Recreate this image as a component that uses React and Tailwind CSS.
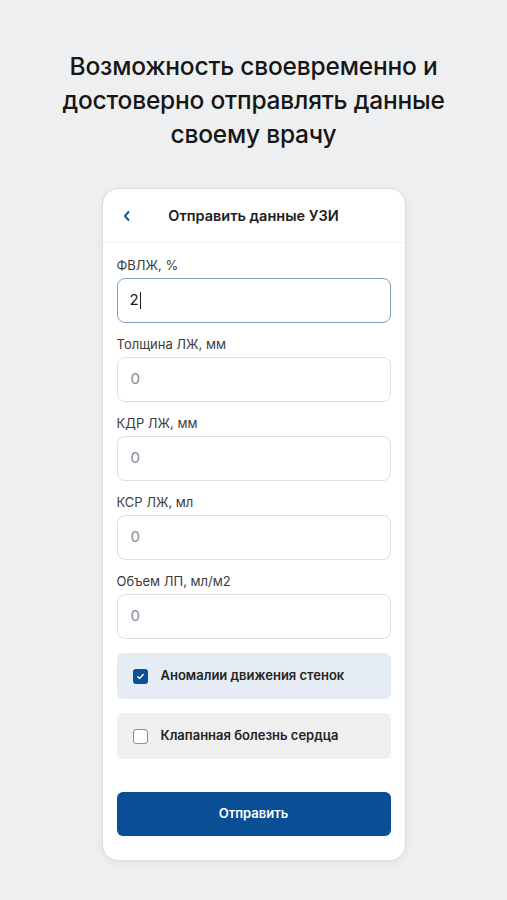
import React from "react";

const FIELDS = [
  { label: "ФВЛЖ, %", value: "2", active: true },
  { label: "Толщина ЛЖ, мм", value: "" },
  { label: "КДР ЛЖ, мм", value: "" },
  { label: "КСР ЛЖ, мл", value: "" },
  { label: "Объем ЛП, мл/м2", value: "" },
];

const Field = ({ label, value, active }) => (
  <div className="flex flex-col">
    <span className="text-[13px] leading-[16px] text-[#3c3c3c] mb-[5px]">{label}</span>
    {active ? (
      <div className="h-[45px] rounded-[8px] border-[1.5px] border-[#7f9fc4] bg-white flex items-center px-[12px] text-[15px] text-[#1c1c1c]">
        {value}
        <span className="w-[1px] h-[17px] bg-[#1c1c1c] ml-[1px]" />
      </div>
    ) : (
      <div className="h-[45px] rounded-[8px] border border-[#dedede] bg-white flex items-center px-[13px] text-[15px] text-[#8a8a8a]">
        0
      </div>
    )}
  </div>
);

const CheckRow = ({ label, checked }) => (
  <div
    className={
      "h-[46px] rounded-[6px] flex items-center px-[16px] gap-[13px] " +
      (checked ? "bg-[#e5ecf3]" : "bg-[#efefef]")
    }
  >
    {checked ? (
      <span className="w-[15px] h-[15px] rounded-[3px] bg-[#0b4f94] flex items-center justify-center">
        <svg width="9" height="9" viewBox="0 0 10 10" fill="none">
          <path d="M2 5.2l2 2 4-4.4" stroke="white" strokeWidth="1.6" strokeLinecap="round" strokeLinejoin="round" />
        </svg>
      </span>
    ) : (
      <span className="w-[15px] h-[15px] rounded-[3px] border-[1.5px] border-[#8c8c8c] bg-white" />
    )}
    <span className="text-[13px] font-semibold text-[#232323]">{label}</span>
  </div>
);

export default function App() {
  return (
    <div
      className="w-[507px] h-[900px] bg-[#eeeff1] flex flex-col items-center overflow-hidden"
      style={{ fontFamily: "Inter, 'Noto Sans', sans-serif" }}
    >
      <h1 className="mt-[49px] text-center text-[24.5px] leading-[34px] font-medium text-[#161616] tracking-[-0.2px]">
        Возможность своевременно и<br />
        достоверно отправлять данные<br />
        своему врачу
      </h1>

      <div className="mt-[37px] w-[304px] bg-white rounded-[16px] border border-[#dcdcdc] shadow-[0_2px_8px_rgba(0,0,0,0.06)] flex flex-col">
        <div className="h-[54px] relative flex items-center justify-center border-b border-[#f1f1f1]">
          <svg className="absolute left-[19px]" width="10" height="12" viewBox="0 0 10 12" fill="none">
            <path d="M6.5 2L3 6l3.5 4" stroke="#15589e" strokeWidth="2" strokeLinecap="round" strokeLinejoin="round" />
          </svg>
          <span className="text-[14.5px] font-semibold text-[#1e1e1e]">Отправить данные УЗИ</span>
        </div>

        <div className="px-[14px] pt-[14px] pb-[24px] flex flex-col">
          <div className="flex flex-col gap-[13px]">
            {FIELDS.map((f) => (
              <Field key={f.label} {...f} />
            ))}
          </div>
          <div className="mt-[14px] flex flex-col gap-[14px]">
            <CheckRow label="Аномалии движения стенок" checked />
            <CheckRow label="Клапанная болезнь сердца" />
          </div>
          <button className="mt-[33px] h-[44px] rounded-[6px] bg-[#0a4f95] text-white text-[13px] font-semibold">
            Отправить
          </button>
        </div>
      </div>
    </div>
  );
}
